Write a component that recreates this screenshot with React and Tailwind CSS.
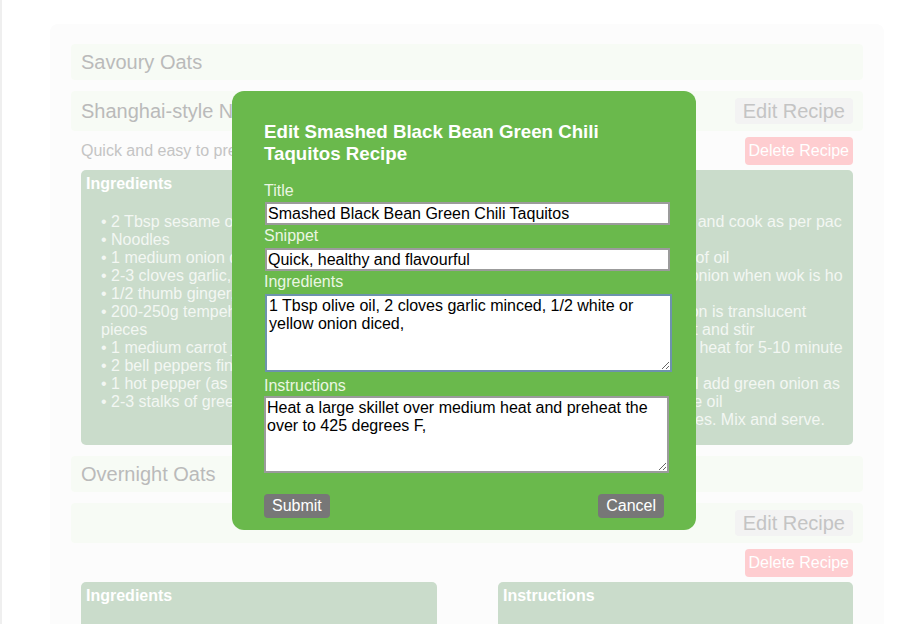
import React from 'react';

const font = { fontFamily: '"Liberation Sans", Arial, sans-serif' };

const shanghaiIngredients = [
  '2 Tbsp sesame oil',
  'Noodles',
  '1 medium onion diced',
  '2-3 cloves garlic, minced',
  '1/2 thumb ginger, minced',
  '200-250g tempeh cut into bite size strips or pieces',
  '1 medium carrot julienned',
  '2 bell peppers finely sliced',
  '1 hot pepper (as desired)',
  '2-3 stalks of green onion',
];

const shanghaiInstructions = [
  'Soak noodles in water and cook as per package instructions',
  'Heat wok, add 2 Tbsp of oil',
  'Fry ginger, garlic and onion when wok is hot',
  'Cook and stir until onion is translucent',
  'Add tempeh and carrot and stir',
  'Simmer all on medium heat for 5-10 minutes',
  'When the skillet is cool add green onion as well as a touch of sesame oil',
  'Add the strained noodles. Mix and serve.',
];

function CollapsedRow({ title }) {
  return (
    <div className="h-[36px] flex items-center px-[10px] rounded-[4px] bg-[#f7fbf5] text-[20px] text-[#bababa]">
      {title}
    </div>
  );
}

function ExpandedRecipe({ title, snippet, ingredients, instructions }) {
  return (
    <div>
      <div className="h-[40px] flex items-center justify-between px-[10px] rounded-[4px] bg-[#f7fbf5]">
        <span className="text-[20px] text-[#bababa]">{title}</span>
        <span className="h-[26px] px-[8px] flex items-center rounded-[4px] bg-[#f3f3f3] text-[20px] text-[#c4c4c4]">
          Edit Recipe
        </span>
      </div>
      <div className="mt-[6px] h-[28px] flex items-center justify-between px-[10px]">
        <span className="text-[16px] text-[#c4c4c4]">{snippet}</span>
        <span className="h-[28px] px-[4px] flex items-center rounded-[4px] bg-[#fecdd0] text-[16px] text-white">
          Delete Recipe
        </span>
      </div>
      <div className="mt-[5px] px-[10px] grid grid-cols-[356px_355px] gap-x-[61px]">
        <div className="rounded-[5px] bg-[#cadccb] px-[5px] pt-[5px] pb-[16px]">
          <div className="font-bold text-white text-[16px] leading-[18px]">Ingredients</div>
          <ul className="mt-[20px] pl-[15px] text-[16px] leading-[18px] text-[#f3f7f3]">
            {ingredients.map((item) => (
              <li key={item}>{`• ${item}`}</li>
            ))}
          </ul>
        </div>
        <div className="rounded-[5px] bg-[#cadccb] px-[5px] pt-[5px] pb-[16px]">
          <div className="font-bold text-white text-[16px] leading-[18px]">Instructions</div>
          <div className="mt-[20px] pl-[15px] pr-[2px] break-all text-[16px] leading-[18px] text-[#f3f7f3]">
            {instructions.map((step, i) => (
              <div key={step}>{`${i + 1}. ${step}`}</div>
            ))}
          </div>
        </div>
      </div>
    </div>
  );
}

export default function App() {
  return (
    <div className="relative min-h-[624px] bg-white border-l-2 border-[#efefef]" style={font}>
      <div className="ml-[48px] pt-[24px] w-[834px]">
        <div className="rounded-[8px] bg-[#fcfcfc] px-[21px] pt-[20px] pb-[40px] flex flex-col gap-[11px]">
          <CollapsedRow title="Savoury Oats" />
          <ExpandedRecipe
            title="Shanghai-style Noodles"
            snippet="Quick and easy to prepare stir-fried noodles"
            ingredients={shanghaiIngredients}
            instructions={shanghaiInstructions}
          />
          <CollapsedRow title="Overnight Oats" />
          <ExpandedRecipe
            title=""
            snippet=""
            ingredients={['1 Tbsp olive oil', '2 cloves garlic minced']}
            instructions={['Heat a large skillet over medium heat']}
          />
        </div>
      </div>

      <div className="absolute left-[230px] top-[91px] w-[464px] rounded-[12px] bg-[#6ab94c] pl-[32px] pr-[32px] pt-[30px] pb-[12px]">
        <h3 className="font-bold text-white text-[18.72px] leading-[22px]">
          Edit Smashed Black Bean Green Chili Taquitos Recipe
        </h3>
        <div className="mt-[17px] text-[16px] leading-[18px] text-[#eaf6e3]">Title</div>
        <input
          className="block mt-[2px] ml-[1px] w-[405px] h-[23px] px-[1px] bg-white border-2 border-[#9b9b9b] text-[16px] text-black outline-none"
          defaultValue="Smashed Black Bean Green Chili Taquitos"
        />
        <div className="mt-[2px] text-[16px] leading-[18px] text-[#eaf6e3]">Snippet</div>
        <input
          className="block mt-[3px] ml-[1px] w-[405px] h-[23px] px-[1px] bg-white border-2 border-[#9b9b9b] text-[16px] text-black outline-none"
          defaultValue="Quick, healthy and flavourful"
        />
        <div className="mt-[2px] text-[16px] leading-[18px] text-[#eaf6e3]">Ingredients</div>
        <textarea
          className="block mt-[3px] ml-[1px] w-[407px] h-[78px] px-[2px] py-[1px] bg-white border-2 border-[#6d93ad] text-[16px] leading-[18px] text-black outline-none"
          defaultValue="1 Tbsp olive oil, 2 cloves garlic minced, 1/2 white or yellow onion diced,"
        />
        <div className="mt-[5px] text-[16px] leading-[18px] text-[#eaf6e3]">Instructions</div>
        <textarea
          className="block mt-[1px] w-[405px] h-[77px] px-[1px] py-[1px] bg-white border-2 border-[#9b9b9b] text-[16px] leading-[18px] text-black outline-none"
          defaultValue="Heat a large skillet over medium heat and preheat the over to 425 degrees F,"
        />
        <div className="mt-[21px] flex justify-between">
          <button className="h-[24px] px-[8px] rounded-[4px] bg-[#777777] text-white text-[16px]">Submit</button>
          <button className="h-[24px] px-[8px] rounded-[4px] bg-[#777777] text-white text-[16px]">Cancel</button>
        </div>
      </div>
    </div>
  );
}
